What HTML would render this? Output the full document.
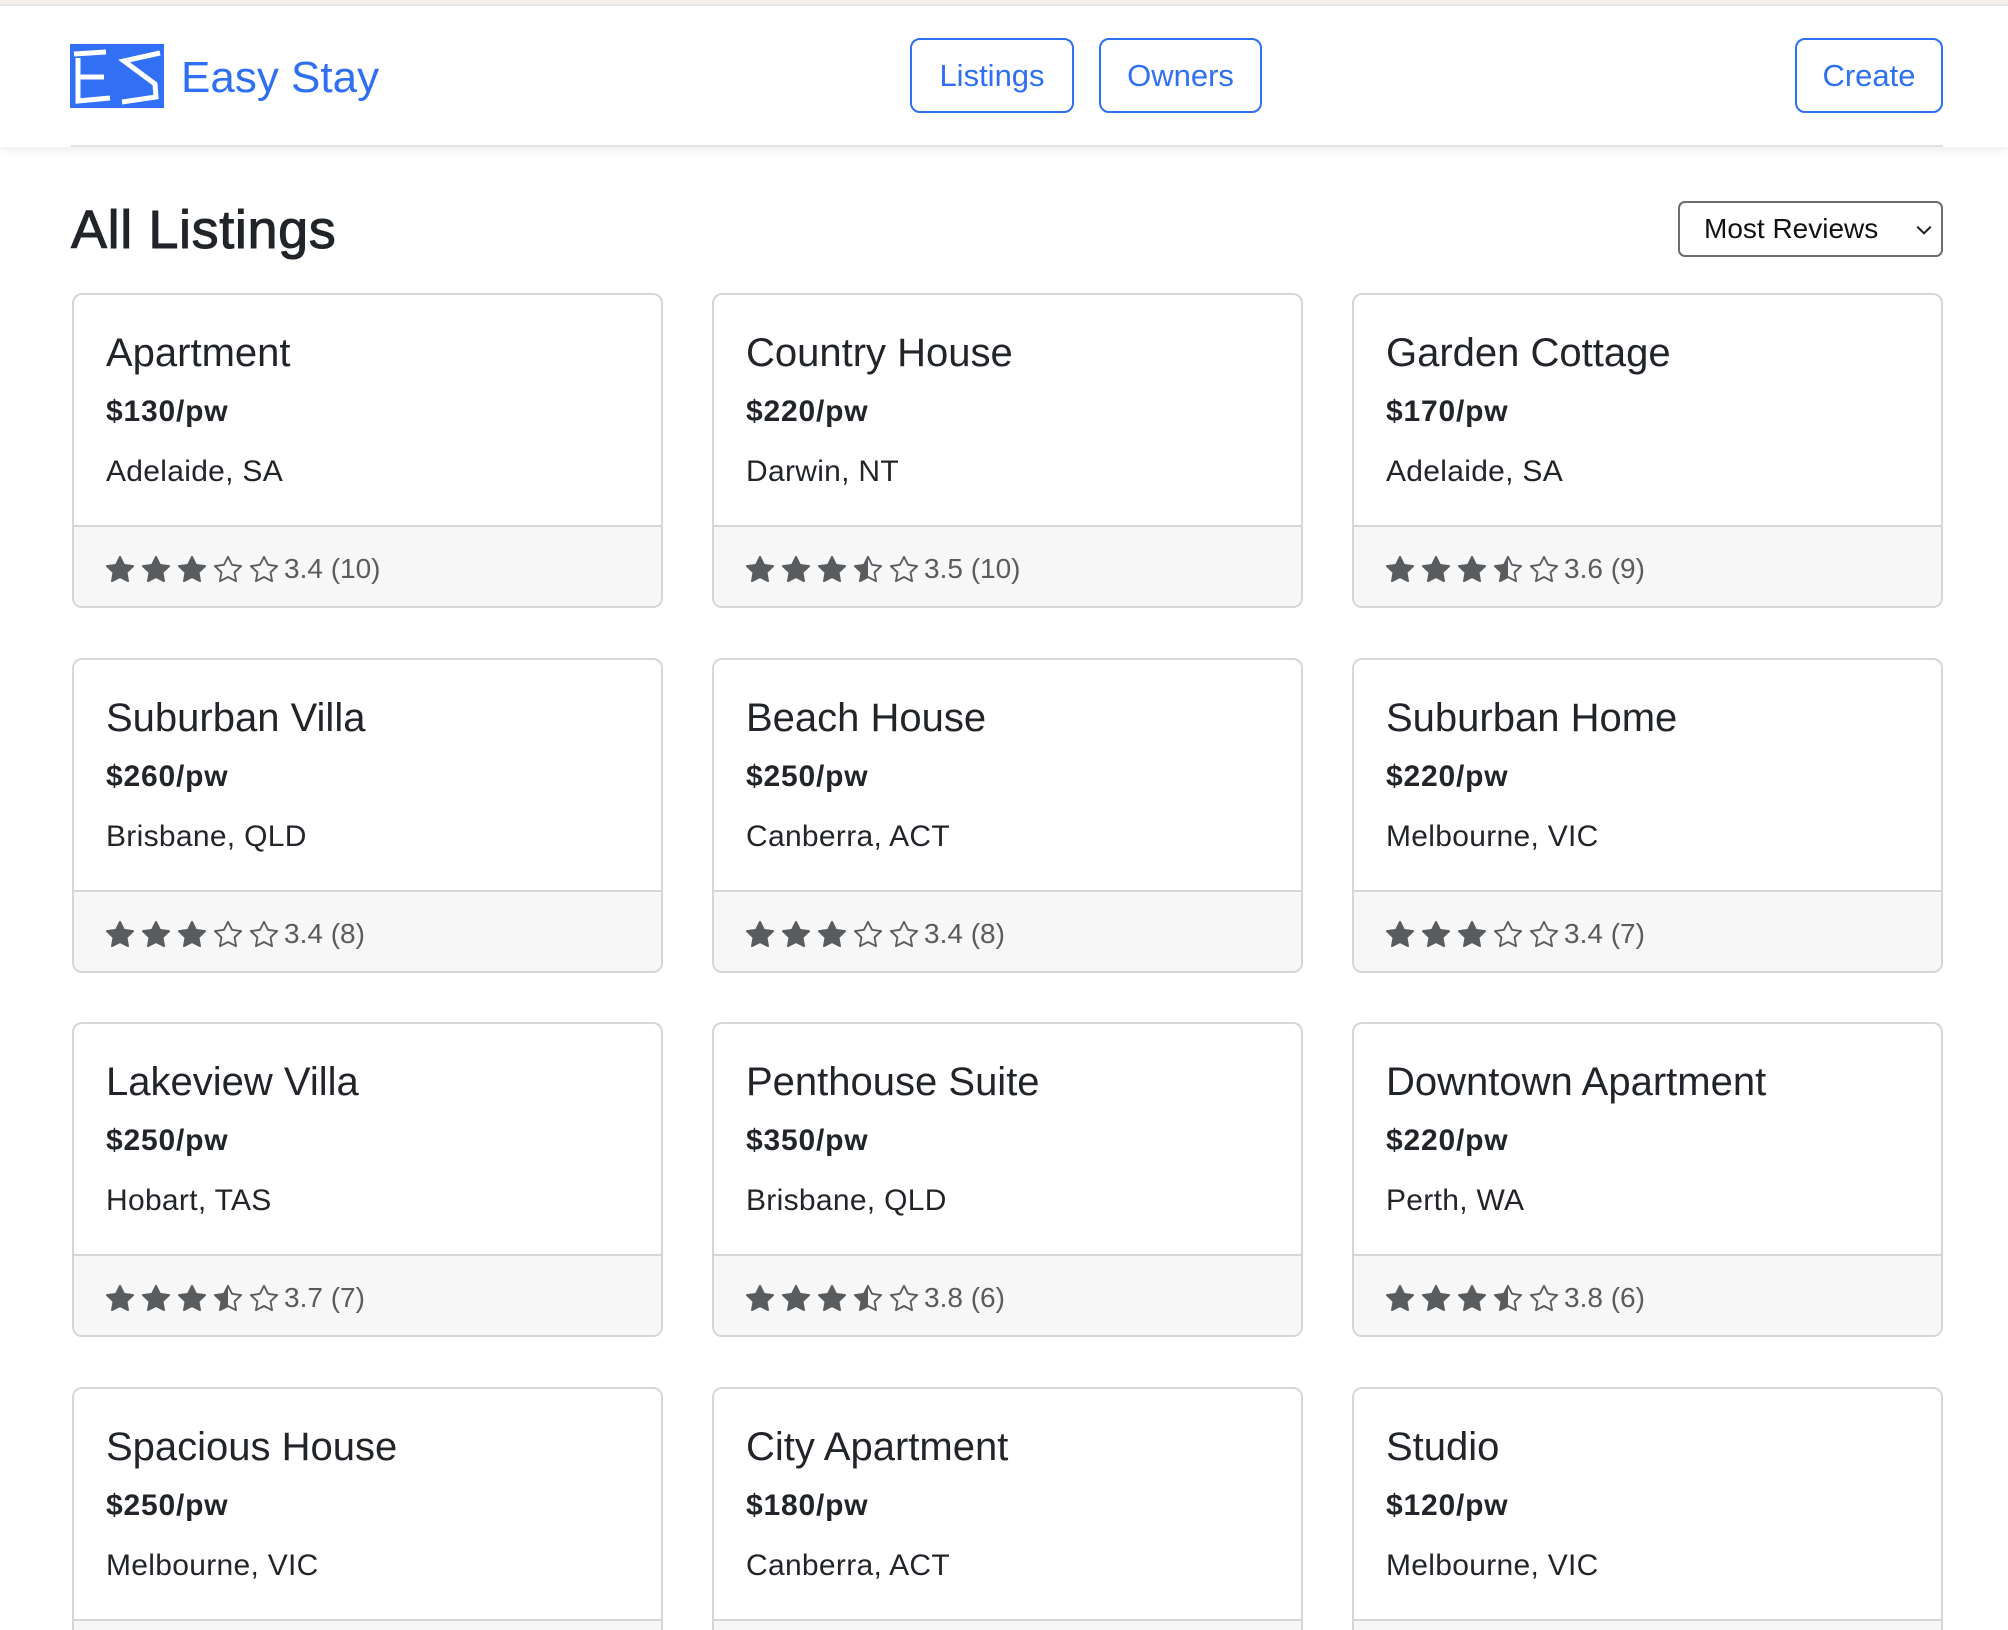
<!DOCTYPE html>
<html><head><meta charset="utf-8">
<style>
*{box-sizing:border-box;margin:0;padding:0}
html{width:2008px;height:1630px;overflow:hidden}
body{width:2008px;height:1630px;overflow:hidden;background:#fff;font-family:"Liberation Sans",Arial,sans-serif;color:#212529;position:relative}
.top{position:absolute;left:0;top:0;width:2008px;height:6px;background:#f6efe9;border-bottom:2px solid #e6e6e6}
.nav{position:absolute;left:0;top:6px;width:2008px;height:141px;background:#fff;box-shadow:0 4px 8px rgba(0,0,0,.07)}
.divider{position:absolute;left:71px;top:145px;width:1872px;height:2px;background:#dee2e6}
.logo{position:absolute;left:70px;top:44px;width:94px;height:64px}
.brand{position:absolute;left:181px;top:48px;font-size:44px;color:#2f6ff2;line-height:60px}
.btn{position:absolute;top:38px;height:75px;border:2px solid #2f6ff2;border-radius:10px;color:#2f6ff2;font-size:31px;line-height:71px;text-align:center}
h1{position:absolute;left:71px;top:196px;font-size:54px;font-weight:normal;line-height:68px;letter-spacing:0.6px;-webkit-text-stroke:1px #212529}
.sel{position:absolute;left:1678px;top:201px;width:265px;height:56px;border:2px solid #6c6c6c;border-radius:7px;font-size:28px;line-height:52px;padding-left:24px;color:#111}
.sel svg{position:absolute;right:8px;top:18px}
.card{position:absolute;width:591px;height:315px;border:2px solid #d6d6d6;border-radius:10px;overflow:hidden;background:#fff}
.card .t{position:absolute;left:32px;top:32px;font-size:40px;font-weight:500;line-height:52px;white-space:nowrap}
.card .p{position:absolute;left:32px;top:97px;font-size:30px;font-weight:700;line-height:40px;letter-spacing:0.8px}
.card .l{position:absolute;left:32px;top:157px;font-size:30px;line-height:40px;letter-spacing:0.3px}
.card .f{position:absolute;left:0;top:230px;width:100%;height:85px;background:#f7f7f7;border-top:2px solid #d6d6d6}
.f .s{position:absolute;left:32px;top:27px;display:flex;align-items:center}
.f svg{width:28px;height:28px;margin-right:8px;fill:#595c5f}
.f span{font-size:28px;color:#595c5f;line-height:30px;margin-left:-2px}
</style></head><body>
<svg width="0" height="0" style="position:absolute">
<symbol id="sf" viewBox="0 0 16 16"><path d="M3.612 15.443c-.386.198-.824-.149-.746-.592l.83-4.730L.173 6.765c-.329-.314-.158-.888.283-.95l4.898-.696L7.538.792c.197-.39.73-.39.927 0l2.184 4.327 4.898.696c.441.062.612.636.282.95l-3.522 3.356.83 4.73c.078.443-.36.79-.746.592L8 13.187l-4.389 2.256z"/></symbol>
<symbol id="so" viewBox="0 0 16 16"><path d="M2.866 14.85c-.078.444.36.791.746.593l4.39-2.256 4.389 2.256c.386.198.824-.149.746-.592l-.83-4.73 3.522-3.356c.33-.314.16-.888-.282-.95l-4.898-.696L8.465.792a.513.513 0 0 0-.927 0L5.354 5.12l-4.898.696c-.441.062-.612.636-.283.95l3.523 3.356-.83 4.730zm4.905-2.767-3.686 1.894.694-3.957a.56.56 0 0 0-.163-.505L1.71 6.745l4.052-.576a.53.53 0 0 0 .393-.288L8 2.223l1.847 3.658a.53.53 0 0 0 .393.288l4.052.575-2.906 2.77a.56.56 0 0 0-.163.506l.694 3.957-3.686-1.894a.5.5 0 0 0-.461 0z"/></symbol>
<symbol id="sh" viewBox="0 0 16 16"><path d="M5.354 5.119 7.538.792A.52.52 0 0 1 8 .5c.183 0 .366.097.465.292l2.184 4.327 4.898.696A.54.54 0 0 1 16 6.32a.55.55 0 0 1-.17.445l-3.523 3.356.83 4.73c.078.443-.36.79-.746.592L8 13.187l-4.389 2.256a.5.5 0 0 1-.146.05c-.342.06-.668-.254-.6-.642l.83-4.730L.173 6.765a.55.55 0 0 1-.172-.403.6.6 0 0 1 .085-.302.51.51 0 0 1 .37-.245zM8 12.027a.5.5 0 0 1 .232.056l3.686 1.894-.694-3.957a.56.56 0 0 1 .162-.505l2.907-2.77-4.052-.576a.53.53 0 0 1-.393-.288L8.001 2.223 8 2.226z"/></symbol>
</svg>
<div class="top"></div>
<div class="nav"></div>
<div class="divider"></div>
<svg class="logo" viewBox="0 0 94 64"><rect width="94" height="64" fill="#316ff5"/>
<g stroke="#fff" stroke-width="5" fill="none" stroke-linejoin="miter">
<path d="M4 10 L36 8"/><path d="M8 14 L8 57 L40 54"/><path d="M8 33 L34 33"/><path d="M90 9 L54 17 L85 40 L86 53 L52 58"/></g></svg>
<div class="brand">Easy Stay</div>
<div class="btn" style="left:910px;width:164px">Listings</div>
<div class="btn" style="left:1099px;width:163px">Owners</div>
<div class="btn" style="left:1795px;width:148px">Create</div>
<h1>All Listings</h1>
<div class="sel">Most Reviews<svg width="18" height="18" viewBox="0 0 16 16"><path d="M2 5l6 6 6-6" stroke="#222" stroke-width="1.8" fill="none"/></svg></div>

<div class="card" style="left:72px;top:293px"><div class="t">Apartment</div><div class="p">$130/pw</div><div class="l">Adelaide, SA</div><div class="f"><div class="s"><svg><use href="#sf"/></svg><svg><use href="#sf"/></svg><svg><use href="#sf"/></svg><svg><use href="#so"/></svg><svg><use href="#so"/></svg><span>3.4 (10)</span></div></div></div>
<div class="card" style="left:712px;top:293px"><div class="t">Country House</div><div class="p">$220/pw</div><div class="l">Darwin, NT</div><div class="f"><div class="s"><svg><use href="#sf"/></svg><svg><use href="#sf"/></svg><svg><use href="#sf"/></svg><svg><use href="#sh"/></svg><svg><use href="#so"/></svg><span>3.5 (10)</span></div></div></div>
<div class="card" style="left:1352px;top:293px"><div class="t">Garden Cottage</div><div class="p">$170/pw</div><div class="l">Adelaide, SA</div><div class="f"><div class="s"><svg><use href="#sf"/></svg><svg><use href="#sf"/></svg><svg><use href="#sf"/></svg><svg><use href="#sh"/></svg><svg><use href="#so"/></svg><span>3.6 (9)</span></div></div></div>

<div class="card" style="left:72px;top:658px"><div class="t">Suburban Villa</div><div class="p">$260/pw</div><div class="l">Brisbane, QLD</div><div class="f"><div class="s"><svg><use href="#sf"/></svg><svg><use href="#sf"/></svg><svg><use href="#sf"/></svg><svg><use href="#so"/></svg><svg><use href="#so"/></svg><span>3.4 (8)</span></div></div></div>
<div class="card" style="left:712px;top:658px"><div class="t">Beach House</div><div class="p">$250/pw</div><div class="l">Canberra, ACT</div><div class="f"><div class="s"><svg><use href="#sf"/></svg><svg><use href="#sf"/></svg><svg><use href="#sf"/></svg><svg><use href="#so"/></svg><svg><use href="#so"/></svg><span>3.4 (8)</span></div></div></div>
<div class="card" style="left:1352px;top:658px"><div class="t">Suburban Home</div><div class="p">$220/pw</div><div class="l">Melbourne, VIC</div><div class="f"><div class="s"><svg><use href="#sf"/></svg><svg><use href="#sf"/></svg><svg><use href="#sf"/></svg><svg><use href="#so"/></svg><svg><use href="#so"/></svg><span>3.4 (7)</span></div></div></div>

<div class="card" style="left:72px;top:1022px"><div class="t">Lakeview Villa</div><div class="p">$250/pw</div><div class="l">Hobart, TAS</div><div class="f"><div class="s"><svg><use href="#sf"/></svg><svg><use href="#sf"/></svg><svg><use href="#sf"/></svg><svg><use href="#sh"/></svg><svg><use href="#so"/></svg><span>3.7 (7)</span></div></div></div>
<div class="card" style="left:712px;top:1022px"><div class="t">Penthouse Suite</div><div class="p">$350/pw</div><div class="l">Brisbane, QLD</div><div class="f"><div class="s"><svg><use href="#sf"/></svg><svg><use href="#sf"/></svg><svg><use href="#sf"/></svg><svg><use href="#sh"/></svg><svg><use href="#so"/></svg><span>3.8 (6)</span></div></div></div>
<div class="card" style="left:1352px;top:1022px"><div class="t">Downtown Apartment</div><div class="p">$220/pw</div><div class="l">Perth, WA</div><div class="f"><div class="s"><svg><use href="#sf"/></svg><svg><use href="#sf"/></svg><svg><use href="#sf"/></svg><svg><use href="#sh"/></svg><svg><use href="#so"/></svg><span>3.8 (6)</span></div></div></div>

<div class="card" style="left:72px;top:1387px"><div class="t">Spacious House</div><div class="p">$250/pw</div><div class="l">Melbourne, VIC</div><div class="f"></div></div>
<div class="card" style="left:712px;top:1387px"><div class="t">City Apartment</div><div class="p">$180/pw</div><div class="l">Canberra, ACT</div><div class="f"></div></div>
<div class="card" style="left:1352px;top:1387px"><div class="t">Studio</div><div class="p">$120/pw</div><div class="l">Melbourne, VIC</div><div class="f"></div></div>
</body></html>
